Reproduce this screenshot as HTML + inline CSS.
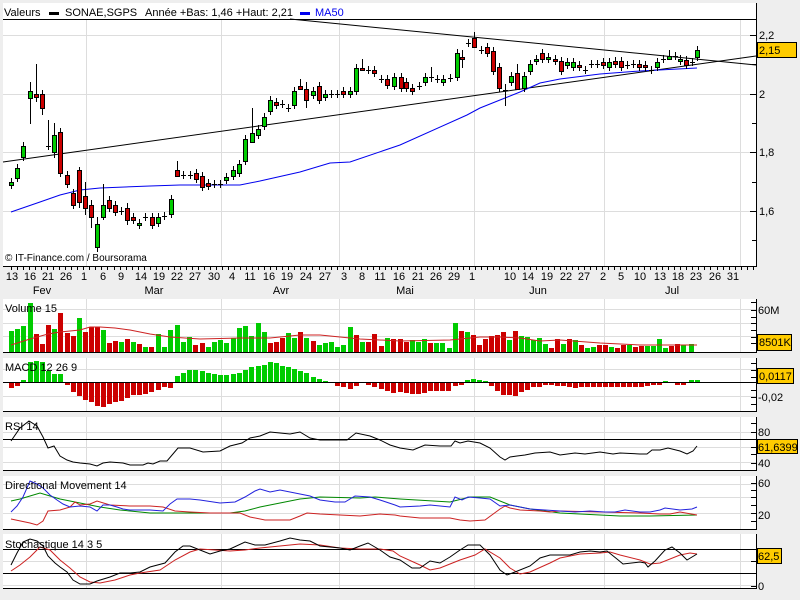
<!DOCTYPE html>
<html><head><meta charset="utf-8"><style>
html,body{margin:0;padding:0;background:#eeeeee;}
svg{display:block;font-family:"Liberation Sans",sans-serif;font-size:11px;}
</style></head><body>
<svg id="s" width="800" height="600" xmlns="http://www.w3.org/2000/svg">
<rect width="800" height="600" fill="#eeeeee"/>
<!-- main panel -->
<rect x="3" y="3" width="753" height="263" fill="#fff"/>
<g stroke="#dddddd" stroke-width="1">
<line x1="3" y1="35.5" x2="756" y2="35.5"/><line x1="3" y1="94.5" x2="756" y2="94.5"/><line x1="3" y1="152.5" x2="756" y2="152.5"/><line x1="3" y1="211.5" x2="756" y2="211.5"/>
<line x1="86.5" y1="20" x2="86.5" y2="266"/><line x1="221.5" y1="20" x2="221.5" y2="266"/><line x1="339.5" y1="20" x2="339.5" y2="266"/><line x1="474.5" y1="20" x2="474.5" y2="266"/><line x1="604.5" y1="20" x2="604.5" y2="266"/><line x1="740.5" y1="20" x2="740.5" y2="266"/>
</g>
<line x1="3" y1="19.5" x2="756" y2="19.5" stroke="#000"/>
<text x="4" y="16">Valeurs</text>
<rect x="49" y="12" width="10" height="3" fill="#000"/>
<text x="65" y="16">SONAE,SGPS</text>
<text x="145" y="16">Année +Bas: 1,46 +Haut: 2,21</text>
<rect x="300" y="12" width="10" height="3" fill="#0000ee"/>
<text x="315" y="16" fill="#0000ee">MA50</text>
<line x1="290" y1="19" x2="756" y2="65" stroke="#000"/>
<line x1="3" y1="162" x2="756" y2="56" stroke="#000"/>
<polyline fill="none" stroke="#0000ee" points="11,212 40,202 60,195 80,190 100,188 150,186 180,185 240,185 260,181 300,172 330,163 350,162 400,145 467,115 480,108 500,100 520,92 540,83 560,79 600,74 640,71 697,68"/>
<g id="candles"></g>
<text x="5" y="261" font-size="10">© IT-Finance.com / Boursorama</text>
<line x1="3" y1="266.5" x2="757" y2="266.5" stroke="#000"/>
<line x1="756.5" y1="3" x2="756.5" y2="267" stroke="#000"/>
<g stroke="#000"><line x1="750" y1="35.5" x2="756" y2="35.5"/><line x1="752" y1="64.5" x2="756" y2="64.5"/><line x1="750" y1="94.5" x2="756" y2="94.5"/><line x1="752" y1="123.5" x2="756" y2="123.5"/><line x1="750" y1="152.5" x2="756" y2="152.5"/><line x1="752" y1="182.5" x2="756" y2="182.5"/><line x1="750" y1="211.5" x2="756" y2="211.5"/><line x1="752" y1="240.5" x2="756" y2="240.5"/></g>
<text x="759" y="39">2,2</text><text x="759" y="98">2</text><text x="759" y="156">1,8</text><text x="759" y="215">1,6</text>
<rect x="757.5" y="42.5" width="39" height="15" fill="#ffcc00" stroke="#000"/>
<text x="759" y="54">2,15</text>
<g id="xt" stroke="#000"></g>
<g font-size="11" text-anchor="middle">
<text x="12" y="280">13</text><text x="30" y="280">16</text><text x="48" y="280">21</text><text x="66" y="280">26</text><text x="84" y="280">1</text><text x="103" y="280">6</text><text x="121" y="280">9</text><text x="141" y="280">14</text><text x="159" y="280">19</text><text x="177" y="280">22</text><text x="195" y="280">27</text><text x="214" y="280">30</text><text x="232" y="280">4</text><text x="250" y="280">11</text><text x="269" y="280">16</text><text x="287" y="280">19</text><text x="306" y="280">24</text><text x="325" y="280">27</text><text x="344" y="280">3</text><text x="362" y="280">8</text><text x="380" y="280">11</text><text x="399" y="280">16</text><text x="418" y="280">21</text><text x="436" y="280">26</text><text x="454" y="280">29</text><text x="472" y="280">1</text><text x="510" y="280">10</text><text x="528" y="280">14</text><text x="547" y="280">19</text><text x="566" y="280">22</text><text x="584" y="280">27</text><text x="603" y="280">2</text><text x="621" y="280">5</text><text x="640" y="280">10</text><text x="660" y="280">13</text><text x="678" y="280">18</text><text x="696" y="280">23</text><text x="715" y="280">26</text><text x="733" y="280">31</text>
<text x="42" y="294">Fev</text><text x="154" y="294">Mar</text><text x="281" y="294">Avr</text><text x="405" y="294">Mai</text><text x="538" y="294">Jun</text><text x="672" y="294">Jul</text>
</g>

<!-- sub panels -->
<g fill="#fff"><rect x="3" y="299" width="753" height="53"/><rect x="3" y="358" width="753" height="53"/><rect x="3" y="417" width="753" height="53"/><rect x="3" y="476" width="753" height="53"/><rect x="3" y="534" width="753" height="54"/></g>
<g stroke="#dddddd">
<line x1="3" y1="309.5" x2="756" y2="309.5"/><line x1="3" y1="323.5" x2="756" y2="323.5"/><line x1="3" y1="336.5" x2="756" y2="336.5"/>
<line x1="3" y1="369.5" x2="756" y2="369.5"/><line x1="3" y1="396.5" x2="756" y2="396.5"/>
<line x1="3" y1="432.5" x2="756" y2="432.5"/><line x1="3" y1="447.5" x2="756" y2="447.5"/><line x1="3" y1="462.5" x2="756" y2="462.5"/>
<line x1="3" y1="484.5" x2="756" y2="484.5"/><line x1="3" y1="497.5" x2="756" y2="497.5"/><line x1="3" y1="513.5" x2="756" y2="513.5"/>
<line x1="3" y1="561.5" x2="756" y2="561.5"/><line x1="3" y1="585.5" x2="756" y2="585.5"/>
</g>
<g id="vgrid" stroke="#dddddd"></g>
<g id="vol"></g>
<polyline fill="none" stroke="#cc2222" points="11,345 30,339 48,334 60,332 80,330 90,327 100,327 115,328 130,330 150,334 170,337 200,339 240,338 270,338 300,335 320,335 340,337 360,339 400,341 450,340 480,337 500,337 520,338 540,341 560,340 600,343 640,345 660,345 697,345"/>
<g id="macd"></g>
<line x1="3" y1="382.5" x2="756" y2="382.5" stroke="#000"/>
<line x1="3" y1="439.5" x2="756" y2="439.5" stroke="#000"/>
<polyline fill="none" stroke="#000" points="11,441 20,428 29,421 37,426 43,437 48,448 54,446 60,456 67,460 73,462 80,463 90,464 97,466 103,463 110,462 123,463 130,465 143,465 148,463 153,464 160,461 167,461 178,448 190,448 203,452 220,451 230,446 242,443 250,438 260,436 270,432 280,433 290,434 300,432 310,438 320,440 330,440 347,440 356,433 370,436 380,440 390,445 400,448 413,450 425,445 440,446 451,446 455,441 460,443 468,441 480,443 490,448 500,457 505,460 510,457 517,456 525,455 535,453 550,452 560,455 575,453 585,454 600,452 613,454 620,453 640,454 647,454 652,450 660,450 668,448 680,451 687,454 693,451 697,446"/>
<polyline fill="none" stroke="#008800" points="11,501 20,499 30,496 40,493 50,496 60,499 70,501 85,504 100,507 120,510 130,511 150,513 170,513 200,513 230,513 245,511 260,507 280,503 300,499 320,497 360,498 375,497 400,499 450,502 470,497 490,497 510,505 530,509 560,513 600,515 620,516 650,516 697,515"/>
<polyline fill="none" stroke="#cc2222" points="11,519 30,523 37,525 43,521 48,511 60,510 70,507 75,502 80,505 90,504 97,501 110,505 130,506 150,506 163,507 175,511 190,512 210,513 240,513 250,517 265,520 290,520 300,516 307,513 320,514 360,516 380,514 395,515 400,516 420,518 450,518 460,520 470,521 485,520 500,509 505,506 510,508 520,510 540,511 550,512 560,511 600,512 640,513 660,514 670,514 680,512 697,515"/>
<polyline fill="none" stroke="#2222dd" points="11,512 17,506 23,497 30,481 37,484 43,488 50,495 57,500 63,504 70,507 80,506 90,507 97,511 103,505 110,505 117,507 123,509 130,510 150,510 163,511 170,504 177,499 190,499 200,500 220,503 235,502 245,497 255,491 260,489 270,492 280,490 300,494 310,496 320,500 335,502 345,502 355,496 370,497 380,500 395,505 400,507 420,506 430,505 450,507 455,497 462,500 468,497 480,498 490,499 500,506 510,505 520,507 530,509 545,510 560,511 575,512 590,511 605,512 615,512 625,510 640,512 650,512 660,510 665,508 680,510 692,509 697,507"/>
<line x1="3" y1="549.5" x2="756" y2="549.5" stroke="#000"/>
<line x1="3" y1="573.5" x2="756" y2="573.5" stroke="#000"/>
<polyline fill="none" stroke="#cc2222" points="11,571 20,565 30,557 40,547 50,550 60,560 70,568 80,577 90,582 100,583 115,580 130,575 140,573 160,570 175,560 190,552 200,549 215,550 230,551 245,550 260,548 280,546 300,544 320,545 340,548 360,549 380,549 393,551 400,556 420,565 430,570 440,568 460,560 475,555 485,549 500,558 510,568 520,574 530,572 550,563 560,558 580,554 600,553 610,552 620,555 640,560 650,564 660,563 680,555 690,553 697,554"/>
<polyline fill="none" stroke="#000" points="11,565 17,553 23,542 30,539 37,541 43,546 48,556 55,563 60,567 67,572 73,580 80,584 90,584 97,581 110,577 120,573 130,573 140,572 150,567 165,563 175,552 183,546 190,546 200,550 210,554 220,551 230,549 245,542 255,545 265,545 280,541 290,538 300,540 310,541 320,546 340,548 350,550 360,546 368,543 380,550 390,557 400,560 412,568 420,568 430,561 440,563 450,557 460,550 468,545 480,545 490,555 500,570 507,575 515,572 530,566 540,558 550,555 570,555 580,552 590,551 600,552 607,551 617,559 623,564 640,562 645,563 648,567 655,561 665,550 672,547 680,553 687,560 697,554"/>
<g stroke="#000">
<line x1="3" y1="352.5" x2="757" y2="352.5"/><line x1="3" y1="411.5" x2="757" y2="411.5"/><line x1="3" y1="470.5" x2="757" y2="470.5"/><line x1="3" y1="529.5" x2="757" y2="529.5"/><line x1="3" y1="588.5" x2="757" y2="588.5"/>
<line x1="756.5" y1="299" x2="756.5" y2="352"/><line x1="756.5" y1="358" x2="756.5" y2="411"/><line x1="756.5" y1="417" x2="756.5" y2="470"/><line x1="756.5" y1="476" x2="756.5" y2="529"/><line x1="756.5" y1="534" x2="756.5" y2="588"/>
</g>
<g id="rt" stroke="#000"></g>
<text x="5" y="312">Volume 15</text>
<text x="5" y="371">MACD 12 26 9</text>
<text x="5" y="430">RSI 14</text>
<text x="5" y="489">Directional Movement 14</text>
<text x="5" y="548">Stochastique 14 3 5</text>
<text x="758" y="314">60M</text>
<rect x="757.5" y="334.5" width="34" height="16" fill="#ffcc00" stroke="#000"/><text x="759" y="346">8501K</text>
<rect x="757.5" y="368.5" width="36" height="15" fill="#ffcc00" stroke="#000"/><text x="759" y="380">0,0117</text>
<text x="758" y="401">-0,02</text>
<text x="758" y="436">80</text>
<rect x="757.5" y="439.5" width="40" height="14" fill="#ffcc00" stroke="#000"/><text x="758" y="451">61,6399</text>
<text x="758" y="467">40</text>
<text x="758" y="487">60</text>
<text x="758" y="519">20</text>
<text x="758" y="590">0</text>
<rect x="757.5" y="548.5" width="24" height="15" fill="#ffcc00" stroke="#000"/><text x="758" y="560">62,5</text>
</svg>
<script>
var NS="http://www.w3.org/2000/svg";
function el(p,t,a){var e=document.createElementNS(NS,t);for(var k in a)e.setAttribute(k,a[k]);p.appendChild(e);return e;}
var G="#00cc00",R="#cc0000";
var C=[[11,182,185,'g'],[17,168,178,'g'],[23,146,157,'g'],[30,91,98,'g',82,124],[36,94,97,'r',64,102],[42,94,108,'r',90,115],[48,146,146,'d',120,150],[54,135,152,'g',123,158],[60,132,173,'r'],[67,175,184,'r'],[73,193,205,'r'],[79,170,202,'r',167,208],[85,196,208,'r',182,215],[91,205,217,'r',200,228],[97,224,247,'g',217,252],[103,205,217,'g',184,220],[109,200,208,'r'],[115,205,212,'r'],[121,211,211,'d'],[127,208,220,'r',203,225],[133,217,220,'r'],[139,223,225,'g'],[145,217,217,'d'],[152,217,225,'r'],[158,217,223,'g'],[164,216,216,'d'],[171,199,214,'g'],[177,170,176,'r',161,176],[183,175,175,'d'],[190,175,175,'d'],[196,173,179,'r'],[202,176,187,'r'],[208,183,186,'r'],[214,184,184,'d'],[220,184,184,'d'],[226,177,180,'g'],[233,170,176,'g'],[239,164,173,'g'],[245,139,161,'g'],[252,133,142,'g',108,143],[258,129,135,'g'],[264,117,126,'g'],[270,100,111,'g'],[276,102,105,'r'],[282,104,104,'d'],[288,108,108,'d'],[294,91,105,'g'],[300,86,89,'r',79,89],[306,89,100,'r',82,108],[313,91,95,'g'],[319,86,100,'r'],[325,94,97,'g'],[331,94,94,'d'],[337,94,94,'d'],[343,91,94,'r'],[350,91,94,'g'],[356,68,91,'g'],[362,68,70,'r',59,70],[368,70,70,'d'],[374,70,73,'r'],[381,79,79,'d'],[387,79,85,'r'],[394,77,86,'g'],[401,77,88,'r'],[406,82,88,'r'],[412,88,91,'r'],[419,86,86,'d'],[425,77,82,'g'],[431,77,77,'d',67,82],[437,79,79,'d'],[443,79,82,'g'],[450,78,78,'d'],[457,53,77,'g'],[462,57,59,'r',50,68],[468,43,43,'d'],[474,38,47,'r',32,47],[481,50,50,'d'],[487,47,53,'r'],[493,51,71,'r'],[499,67,88,'r'],[505,90,90,'d',84,106],[511,76,82,'g'],[517,73,89,'r',64,90],[524,76,88,'g'],[530,64,71,'g'],[536,59,61,'g'],[542,53,59,'r'],[548,57,59,'g'],[555,59,61,'r'],[561,61,71,'r'],[567,62,65,'g'],[573,62,67,'g'],[579,65,67,'r'],[585,70,70,'d'],[591,64,64,'d'],[597,64,64,'d'],[603,62,65,'r'],[609,62,67,'g'],[615,61,64,'r'],[621,61,67,'r'],[627,65,65,'d'],[633,64,64,'d'],[639,64,67,'r'],[645,65,67,'r'],[651,70,70,'d'],[657,62,67,'g'],[663,59,59,'d'],[669,56,59,'g',50,59],[675,56,56,'d'],[680,59,61,'g'],[686,60,65,'r'],[692,62,62,'d'],[697,50,57,'g']];
var cg=document.getElementById('candles');
C.forEach(function(c){var x=c[0],hi=c[4]||c[1]-4,lo=c[5]||c[2]+4;
el(cg,'line',{x1:x+.5,x2:x+.5,y1:hi,y2:lo,stroke:'#000'});
if(c[3]=='d'){el(cg,'line',{x1:x-2,x2:x+3,y1:c[1]+.5,y2:c[1]+.5,stroke:'#000'});}
else el(cg,'rect',{x:x-1.5,y:c[1]+.5,width:4,height:Math.max(2,c[2]-c[1]),fill:c[3]=='g'?G:R,stroke:'#000'});});
var xt=document.getElementById('xt');
for(var x=11;x<756;x+=6.03){el(xt,'line',{x1:Math.round(x)+.5,x2:Math.round(x)+.5,y1:267,y2:270});}
var vg=document.getElementById('vgrid');
[86,221,339,474,604,740].forEach(function(x){[[299,352],[358,411],[417,470],[476,529],[534,588]].forEach(function(r){el(vg,'line',{x1:x+.5,x2:x+.5,y1:r[0],y2:r[1]});});});
var V=[[11,331,'g'],[17,329,'g'],[23,326,'g'],[30,303,'g'],[36,334,'r'],[42,344,'r'],[48,325,'r'],[54,329,'g'],[60,313,'r'],[67,333,'r'],[73,336,'r'],[79,318,'g'],[85,332,'r'],[91,327,'r'],[97,327,'r'],[103,330,'g'],[109,343,'r'],[115,341,'r'],[121,342,'g'],[127,339,'r'],[133,342,'g'],[139,344,'r'],[145,347,'g'],[151,347,'r'],[158,334,'g'],[164,347,'g'],[170,330,'g'],[177,325,'g'],[183,342,'g'],[189,337,'g'],[195,345,'r'],[202,343,'r'],[208,347,'g'],[214,342,'g'],[220,340,'g'],[226,343,'g'],[233,338,'g'],[239,328,'g'],[245,326,'g'],[251,336,'g'],[258,323,'g'],[264,332,'g'],[270,343,'r'],[276,342,'r'],[282,338,'r'],[288,333,'g'],[294,338,'g'],[300,332,'r'],[306,338,'g'],[313,341,'r'],[319,345,'g'],[325,343,'g'],[331,342,'g'],[337,347,'g'],[343,345,'g'],[350,327,'g'],[356,335,'r'],[362,342,'g'],[368,342,'r'],[374,334,'r'],[381,346,'r'],[387,338,'g'],[393,339,'r'],[400,339,'r'],[406,342,'r'],[412,340,'g'],[418,342,'g'],[424,339,'g'],[430,343,'r'],[436,343,'g'],[442,343,'g'],[449,348,'g'],[455,323,'g'],[461,331,'r'],[467,332,'g'],[473,335,'r'],[479,345,'r'],[485,339,'r'],[491,336,'r'],[497,335,'r'],[503,332,'r'],[509,340,'g'],[515,331,'r'],[521,336,'g'],[527,337,'g'],[533,340,'g'],[539,338,'g'],[545,344,'g'],[551,348,'r'],[557,339,'r'],[563,344,'g'],[569,339,'r'],[575,340,'g'],[581,345,'r'],[587,348,'g'],[593,347,'g'],[599,345,'r'],[605,345,'r'],[611,347,'g'],[617,348,'r'],[623,345,'r'],[629,345,'g'],[635,347,'r'],[641,346,'r'],[647,346,'g'],[653,346,'g'],[659,339,'g'],[665,348,'g'],[671,346,'r'],[677,344,'r'],[683,345,'g'],[691,344,'g']];
var vv=document.getElementById('vol');
V.forEach(function(v){el(vv,'rect',{x:v[0]-2,y:v[1],width:5,height:352-v[1],fill:v[2]=='g'?G:R});});
var M=[[11,387],[17,385],[23,380],[30,362],[36,361],[42,362],[48,371],[54,374],[60,374],[67,384],[73,391],[79,395],[85,399],[91,401],[97,405],[103,406],[109,403],[115,401],[121,400],[127,397],[133,394],[139,394],[145,393],[151,391],[158,389],[164,386],[170,387],[177,376],[183,373],[189,370],[195,370],[202,371],[208,373],[214,374],[220,375],[226,375],[233,374],[239,373],[245,370],[251,367],[258,366],[264,365],[270,362],[276,363],[282,366],[288,367],[294,369],[300,371],[306,373],[313,377],[319,379],[325,381],[337,385],[343,386],[350,388],[356,385],[368,384],[374,386],[381,388],[387,390],[393,392],[400,391],[406,392],[412,393],[418,393],[424,392],[430,390],[436,390],[442,390],[448,390],[455,385],[461,384],[467,380],[473,379],[479,380],[485,381],[491,385],[497,390],[503,394],[509,394],[515,395],[521,391],[527,389],[533,386],[539,386],[545,384],[551,384],[557,385],[563,385],[569,386],[575,387],[581,386],[587,386],[593,386],[599,386],[605,386],[611,386],[617,386],[623,386],[629,386],[635,386],[641,386],[647,385],[653,384],[659,384],[665,381],[677,384],[683,384],[691,380],[697,380]];
var mg=document.getElementById('macd');
M.forEach(function(m){var y=m[1];if(y<382)el(mg,'rect',{x:m[0]-2,y:y,width:5,height:382-y,fill:G});else el(mg,'rect',{x:m[0]-2,y:383,width:5,height:y-382,fill:R});});
var rt=document.getElementById('rt');
[302,310,317,323,330,337,343,363,370,377,390,397,404,423,432,447,454,463,483,490,497,505,513,521,549,561,573,586].forEach(function(y){el(rt,'line',{x1:751,x2:756,y1:y+.5,y2:y+.5});});
</script>
</body></html>
